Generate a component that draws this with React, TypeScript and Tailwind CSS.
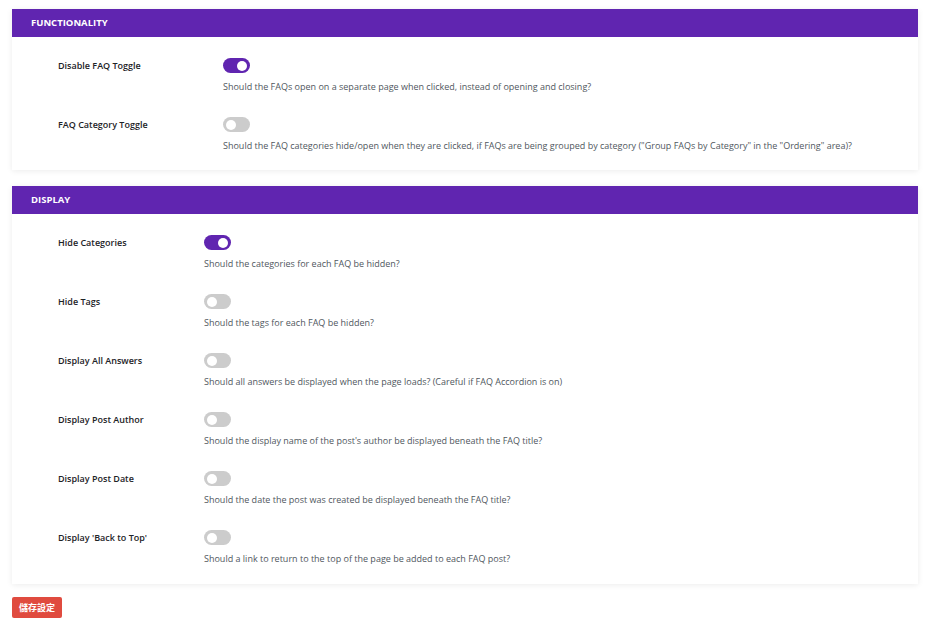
const functionality = [
  {
    label: "Disable FAQ Toggle",
    on: true,
    desc: "Should the FAQs open on a separate page when clicked, instead of opening and closing?",
  },
  {
    label: "FAQ Category Toggle",
    on: false,
    desc: 'Should the FAQ categories hide/open when they are clicked, if FAQs are being grouped by category ("Group FAQs by Category" in the "Ordering" area)?',
  },
]

const display = [
  { label: "Hide Categories", on: true, desc: "Should the categories for each FAQ be hidden?" },
  { label: "Hide Tags", on: false, desc: "Should the tags for each FAQ be hidden?" },
  {
    label: "Display All Answers",
    on: false,
    desc: "Should all answers be displayed when the page loads? (Careful if FAQ Accordion is on)",
  },
  {
    label: "Display Post Author",
    on: false,
    desc: "Should the display name of the post's author be displayed beneath the FAQ title?",
  },
  {
    label: "Display Post Date",
    on: false,
    desc: "Should the date the post was created be displayed beneath the FAQ title?",
  },
  {
    label: "Display 'Back to Top'",
    on: false,
    desc: "Should a link to return to the top of the page be added to each FAQ post?",
  },
]

type Row = { label: string; on: boolean; desc: string }

const Toggle = ({ on }: { on: boolean }) => (
  <div
    className={`flex h-[15px] w-[27px] items-center rounded-full px-[3px] ${
      on ? "justify-end bg-[#6025b0]" : "justify-start bg-[#cccccc]"
    }`}
  >
    <div className="h-[10px] w-[10px] rounded-full bg-white" />
  </div>
)

const Panel = ({
  title,
  rows,
  labelWidth,
  bottom,
}: {
  title: string
  rows: Row[]
  labelWidth: string
  bottom: string
}) => (
  <section className="bg-white shadow-[0_1px_6px_rgba(0,0,0,0.08)]">
    <div className="flex h-[28px] items-center bg-[#6025b0] px-[19px] text-[9.5px] font-bold uppercase text-white">
      {title}
    </div>
    <div className={`flex flex-col gap-[24px] pl-[46px] pt-[21px] ${bottom}`}>
      {rows.map((r) => (
        <div key={r.label} className="flex">
          <div className={`${labelWidth} text-[9px] font-semibold leading-[15px] text-[#1d2327]`}>
            {r.label}
          </div>
          <div className="flex flex-col gap-[8px]">
            <Toggle on={r.on} />
            <p className="text-[9px] leading-[12px] text-[#50575e]">{r.desc}</p>
          </div>
        </div>
      ))}
    </div>
  </section>
)

export default function App() {
  return (
    <div
      className="min-h-[624px] w-[937px] bg-white px-[12px] pt-[9px] pr-[19px]"
      style={{ fontFamily: '"Open Sans", "Noto Sans CJK TC", sans-serif' }}
    >
      <div className="flex flex-col gap-[16px]">
        <Panel title="Functionality" rows={functionality} labelWidth="w-[165px]" bottom="pb-[18px]" />
        <Panel title="Display" rows={display} labelWidth="w-[146px]" bottom="pb-[19px]" />
      </div>
      <button className="mt-[13px] flex h-[21px] w-[50px] items-center justify-center rounded-[2px] bg-[#e04b3f] text-[9px] font-bold text-white">
        儲存設定
      </button>
    </div>
  )
}
